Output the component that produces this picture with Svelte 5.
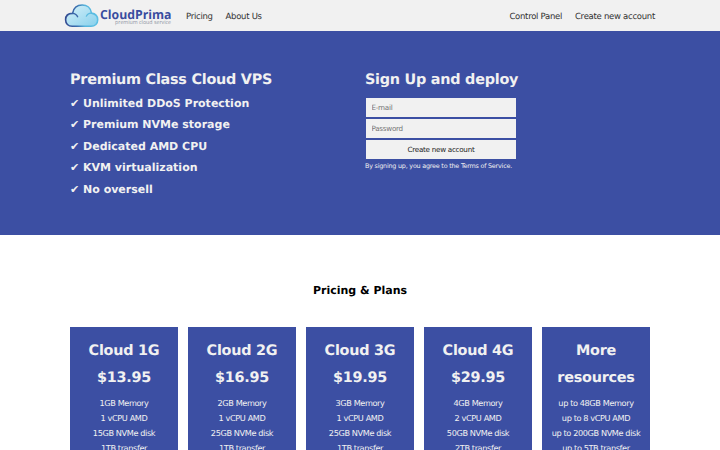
<script lang="ts">
  const features = [
    'Unlimited DDoS Protection',
    'Premium NVMe storage',
    'Dedicated AMD CPU',
    'KVM virtualization',
    'No oversell',
  ];

  const plans = [
    { name: 'Cloud 1G', price: '$13.95', specs: ['1GB Memory', '1 vCPU AMD', '15GB NVMe disk', '1TB transfer'] },
    { name: 'Cloud 2G', price: '$16.95', specs: ['2GB Memory', '1 vCPU AMD', '25GB NVMe disk', '1TB transfer'] },
    { name: 'Cloud 3G', price: '$19.95', specs: ['3GB Memory', '1 vCPU AMD', '25GB NVMe disk', '1TB transfer'] },
    { name: 'Cloud 4G', price: '$29.95', specs: ['4GB Memory', '2 vCPU AMD', '50GB NVMe disk', '2TB transfer'] },
    { name: 'More', price: 'resources', specs: ['up to 48GB Memory', 'up to 8 vCPU AMD', 'up to 200GB NVMe disk', 'up to 5TB transfer'] },
  ];

  let email = $state('');
  let password = $state('');
</script>

<div class="page">
  <header class="topbar">
    <a href="/" class="logo" aria-label="CloudPrima">
      <svg viewBox="0 0 108 26" width="108" height="26">
        <defs>
          <linearGradient id="fill" x1="0" y1="0" x2="1" y2="1">
            <stop offset="0" stop-color="#d8f1f9" />
            <stop offset="1" stop-color="#86d0ec" />
          </linearGradient>
          <linearGradient id="edge" x1="0" y1="0" x2="1" y2="0">
            <stop offset="0" stop-color="#344b91" />
            <stop offset="0.35" stop-color="#3a6fae" />
            <stop offset="0.6" stop-color="#55b4dc" />
            <stop offset="1" stop-color="#5cc0e4" />
          </linearGradient>
        </defs>
        <path d="M8.2 23.3C4.2 23.3 1.6 20.7 1.6 16.8S4.3 10.4 8.6 10.4C9.3 5 13.2 2 18.2 2c4.8 0 8.6 3.2 9.3 8.1 3.8.6 6.2 3.1 6.2 6.6 0 3.9-2.7 6.6-6.7 6.6Z" fill="url(#fill)" stroke="url(#edge)" stroke-width="1.6" />
        <path d="M8.4 10.4c2.8.1 4.6 1.5 5.4 3.8" fill="none" stroke="#3a66a8" stroke-width="1.4" />
        <path d="M22.2 13.6c.8-2.2 2.6-3.5 5.3-3.5" fill="none" stroke="#5cbbe0" stroke-width="1.3" />
        <text x="36" y="15.8" class="brand" textLength="71.5" lengthAdjust="spacingAndGlyphs">CloudPrima</text>
        <text x="51" y="21.4" class="tagline" textLength="56" lengthAdjust="spacingAndGlyphs">premium cloud service</text>
      </svg>
    </a>
    <nav class="links">
      <a href="/pricing">Pricing</a>
      <a href="/about">About Us</a>
    </nav>
    <nav class="links account">
      <a href="/panel">Control Panel</a>
      <a href="/signup">Create new account</a>
    </nav>
  </header>

  <section class="hero">
    <div class="column">
      <h1>Premium Class Cloud VPS</h1>
      <ul class="features">
        {#each features as feature}
          <li>✔ {feature}</li>
        {/each}
      </ul>
    </div>
    <div class="column">
      <h1>Sign Up and deploy</h1>
      <form class="signup" onsubmit={(e) => e.preventDefault()}>
        <input type="email" bind:value={email} placeholder="E-mail" />
        <input type="password" bind:value={password} placeholder="Password" />
        <button type="submit">Create new account</button>
      </form>
      <p class="terms">By signing up, you agree to the <a href="/terms">Terms of Service.</a></p>
    </div>
  </section>

  <section class="pricing">
    <h2>Pricing &amp; Plans</h2>
    <div class="plans">
      {#each plans as plan}
        <article class="plan">
          <h3>{plan.name}<br />{plan.price}</h3>
          <ul>
            {#each plan.specs as spec}
              <li>{spec}</li>
            {/each}
          </ul>
        </article>
      {/each}
    </div>
  </section>
</div>

<style>
  :global(body) { margin: 0; background: #fff; }
  .page { height: 450px; overflow: hidden; font-family: 'DejaVu Sans', sans-serif; text-rendering: geometricPrecision; }
  a { color: inherit; text-decoration: none; }
  h1, h2, h3, p, ul { margin: 0; padding: 0; }
  ul { list-style: none; }

  .topbar { display: flex; align-items: center; height: 31px; box-sizing: border-box; padding: 0 65px 0 64px; background: #f1f1f1; color: #333; }
  .logo { height: 26px; margin-right: 14px; }
  .logo svg { display: block; }
  .brand { font-family: 'Open Sans', sans-serif; font-weight: 700; font-size: 12.5px; fill: #394c9f; }
  .tagline { font-family: 'Open Sans', sans-serif; font-size: 5.5px; fill: #8f94a3; }
  .links { display: flex; gap: 12.8px; padding-top: 2px; font-size: 8.5px; letter-spacing: -0.28px; line-height: 12px; }
  .account { margin-left: auto; }

  .hero { display: flex; gap: 10px; height: 203.5px; box-sizing: border-box; padding: 36px 70px 0; background: #3c4fa3; color: #f1f1f1; }
  .column { flex: 1; }
  h1 { font-size: 14.4px; letter-spacing: -0.25px; line-height: 26px; }
  .features { font-size: 11px; font-weight: 700; line-height: 21.45px; }
  .signup { display: flex; flex-direction: column; gap: 2px; width: 150px; margin: 5px 0 0 1px; }
  .signup input, .signup button { height: 19px; box-sizing: border-box; border: 0; border-radius: 0; padding: 0 5.5px; background: #f1f1f1; color: #222; font-family: inherit; font-size: 7.2px; letter-spacing: -0.28px; outline: none; }
  .signup input::placeholder { color: #757575; }
  .terms { margin-top: 2px; font-size: 6.4px; letter-spacing: -0.21px; line-height: 10px; }

  .pricing { padding: 45.5px 70px 0; }
  h2 { font-size: 11px; line-height: 21px; text-align: center; color: #000; }
  .plans { display: grid; grid-template-columns: repeat(5, 1fr); gap: 10px; margin-top: 26px; }
  .plan { height: 150px; box-sizing: border-box; padding-top: 11px; background: #3c4fa3; color: #f1f1f1; text-align: center; }
  h3 { font-size: 14.4px; letter-spacing: -0.25px; line-height: 26.5px; }
  .plan ul { margin-top: 5px; font-size: 8.2px; letter-spacing: -0.4px; line-height: 15px; white-space: nowrap; }
</style>
